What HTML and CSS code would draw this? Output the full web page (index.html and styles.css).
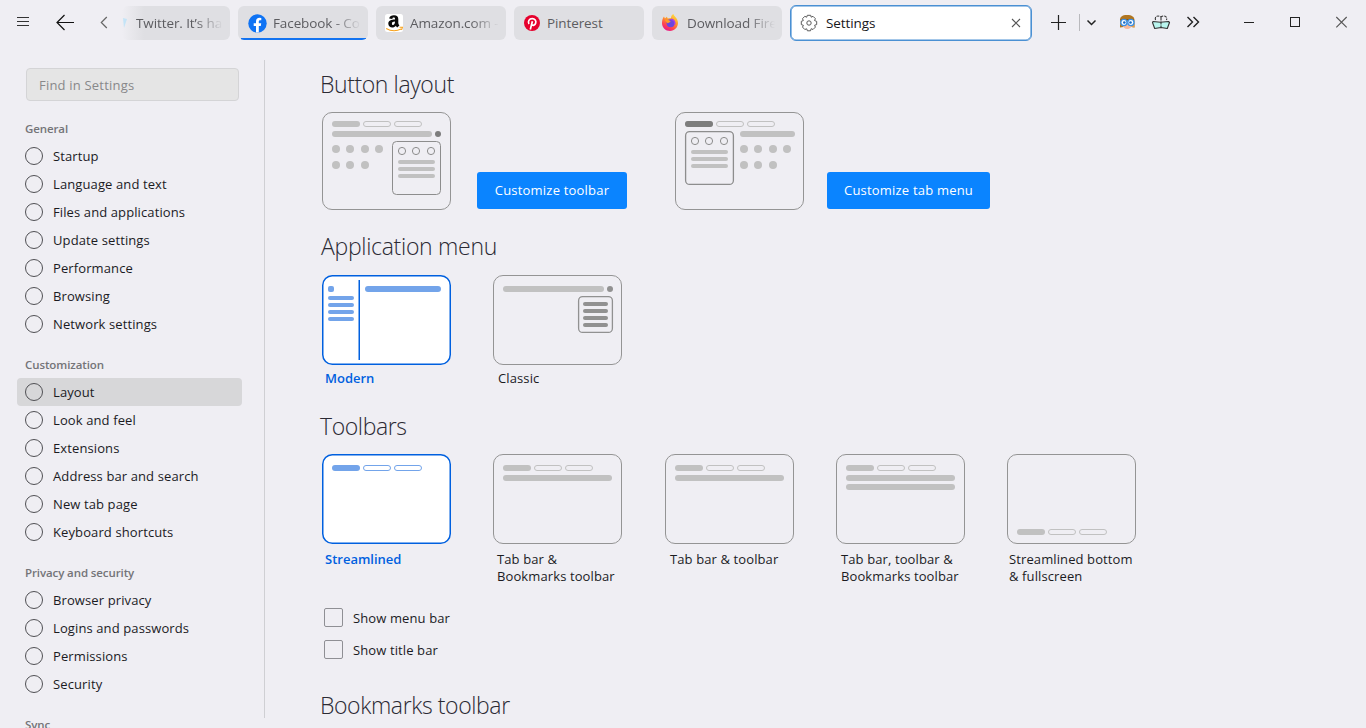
FILE: index.html
```html
<!DOCTYPE html>
<html lang="en">
<head>
<meta charset="utf-8">
<title>Settings</title>
<link rel="stylesheet" href="styles.css">
</head>
<body>
<svg class="defs" aria-hidden="true">
  <defs>
    <g id="tabs3">
      <rect x="0" y="0" width="28" height="6" rx="3" fill="currentColor"/>
      <rect x="31.500" y=".5" width="27" height="5" rx="2.500" fill="none" stroke="currentColor"/>
      <rect x="62.500" y=".5" width="27" height="5" rx="2.500" fill="none" stroke="currentColor"/>
    </g>
    <g id="dots" fill="#c1c1c1">
      <circle cx="4" cy="4" r="4"/><circle cx="18" cy="4" r="4"/><circle cx="33" cy="4" r="4"/><circle cx="47" cy="4" r="4"/>
      <circle cx="4" cy="20" r="4"/><circle cx="18" cy="20" r="4"/><circle cx="33" cy="20" r="4"/>
    </g>
    <g id="panel">
      <g fill="none" stroke="#8d8d8d"><circle cx="10" cy="10" r="3.600"/><circle cx="24" cy="10" r="3.600"/><circle cx="39" cy="10" r="3.600"/></g>
      <g fill="#c1c1c1"><rect x="6" y="19" width="37" height="4" rx="2"/><rect x="6" y="26" width="37" height="4" rx="2"/><rect x="6" y="33" width="37" height="4" rx="2"/></g>
    </g>
  </defs>
</svg>

<header class="titlebar">
  <div class="tool menu"><svg width="46" height="44"><path d="M17 17.500h12M17 21.500h12M17 25.500h12" stroke="#333" fill="none"/></svg></div>
  <div class="tool back"><svg width="38" height="44"><path d="M28 22.500H11M18.500 15l-7.500 7.500 7.500 7.500" stroke="#111" stroke-width="1.200" fill="none"/></svg></div>
  <div class="tool scroll"><svg width="38" height="44"><path d="M22.800 17l-5.500 5.500 5.500 5.500" stroke="#666" stroke-width="1.200" fill="none"/></svg></div>
  <nav class="tabs">
    <div class="tab first"><svg class="bird" width="6" height="12"><path d="M1 1l4 1-3 9z" fill="#c4e4f7"/></svg><span class="title">Twitter. It’s ha</span></div>
    <div class="tab loaded">
      <svg width="19" height="19" viewBox="0 0 19 19"><circle cx="9.500" cy="9.500" r="9.200" fill="#0f73f4"/><path d="M8 18.600V12H5.700V9.300H8V7.400C8 5 9.400 3.800 11.400 3.800l1.900.2v2.300h-1.100c-1.100 0-1.400.6-1.400 1.300v1.700h2.400l-.4 2.700h-2v6.600z" fill="#fff"/></svg>
      <span class="title">Facebook - Co</span>
    </div>
    <div class="tab amazon">
      <svg width="18" height="18" viewBox="0 0 18 18"><rect width="18" height="18" rx="2.500" fill="#fff"/><path d="M4.200 4.500C4.500 2.200 6.500 1.200 9 1.200c3 0 4.300 1.500 4.300 3.800v4c0 1 .4 1.600 1.100 2.400l-2.200 2c-.6-.5-1-1-1.300-1.700-2.200 3-7.600 2.100-7.600-1.900C3.300 6.600 6.100 5.700 10 5.600c.1-1.500-.2-2-1.200-2-.9 0-1.300.5-1.500 1.300zM10 7.600c-2.200 0-3.100.7-3.100 2.100 0 2.100 3.200 1.900 3.100-2.100z" fill="#0a0a0a" fill-rule="evenodd"/><path d="M1.200 14.500c4.700 2.700 10.500 2.700 15 .5M14.500 13.200l2.900.1-.8 2.500" fill="none" stroke="#f7a11a" stroke-width="1.100"/></svg>
      <span class="title">Amazon.com -</span>
    </div>
    <div class="tab pin">
      <svg width="16" height="16" viewBox="0 0 16 16"><circle cx="8" cy="8" r="8" fill="#e6002d"/><path d="M5 9C3.500 6.500 5.200 3.700 8.200 3.700c2.700 0 4.200 1.900 3.500 4.300-.6 2.200-2.900 3-4 1.500M8.400 6.300L6.300 14.500" fill="none" stroke="#fff" stroke-width="1.700"/></svg>
      <span class="title plain">Pinterest</span>
    </div>
    <div class="tab fox">
      <svg width="18" height="18" viewBox="0 0 18 18">
        <defs><linearGradient id="fx" x1=".8" y1="0" x2=".3" y2="1"><stop offset="0" stop-color="#ffe045"/><stop offset=".4" stop-color="#ff9a2a"/><stop offset=".75" stop-color="#ff4052"/><stop offset="1" stop-color="#e5168f"/></linearGradient></defs>
        <path d="M1 9C1 5.500 2 3.700 3 2.500l.9 2 2-1.800.8 1.900L10 4.100C10 2 11.500.5 12.400.1c.3 2.200 4.600 4 4.600 9C17 13.500 13.500 17 9 17S1 13.500 1 9z" fill="url(#fx)"/>
        <circle cx="9.600" cy="9.300" r="4" fill="#6b45e0"/><path d="M3.500 5.700C6 5 9 5.800 9.700 8.100 8 7.900 7.800 9.500 6.300 9.100" fill="#ff9d25"/><path d="M10 5.300c2.600.2 4.300 2.400 3.600 5.200" fill="none" stroke="#a83be8" stroke-width="1.500"/>
      </svg>
      <span class="title">Download Fire</span>
    </div>
    <div class="tab active">
      <svg width="18" height="18" viewBox="0 0 18 18" fill="none" stroke="#5a5a5a"><path stroke-linejoin="round" d="M7.300 1.300h3.400l.5 1.900 1.800-.9 2.400 2.400-.9 1.800 2.200.9v3.200l-2.100.6.8 1.900-2.400 2.400-1.800-.8-.7 2.100H7.400l-.7-2-1.900.7-2.300-2.400.9-1.800-2.100-.7V7.300l2-.7-.8-1.900 2.300-2.400 1.900.9z"/><circle cx="9" cy="9" r="2.200"/></svg>
      <span class="title plain">Settings</span>
      <svg class="close" width="10" height="10"><path d="M1 1l8 8M9 1l-8 8" stroke="#555" stroke-width="1.100"/></svg>
    </div>
  </nav>
  <div class="tool"><svg width="47" height="44"><path d="M19 22.500h15M26.500 15v15" stroke="#222" stroke-width="1.200"/></svg></div>
  <div class="tool sep"><svg width="26" height="44"><path d="M8.500 20.500l4 4 4-4" stroke="#222" stroke-width="1.500" fill="none"/></svg></div>
  <div class="tool"><svg width="44" height="44"><path d="M15 27.500V20c0-3 2-5 7-5s7.500 2 7.500 5v7.500l-3-.5h-8z" fill="#b0751f"/><path d="M15 24h14.500v3.500l-3-.5h-8z" fill="#e3a04f"/><ellipse cx="22.300" cy="25" rx="4.500" ry="4" fill="#f8b999"/><path d="M15.500 19.500h13.500" stroke="#8a5713"/><g fill="#fff" stroke="#3a90e6" stroke-width="1.300"><circle cx="18.900" cy="22.500" r="3.100"/><circle cx="25.900" cy="22.500" r="3.100"/></g><circle cx="19.300" cy="22.500" r="1.300" fill="#1769c4"/><circle cx="25.500" cy="22.500" r="1.300" fill="#1769c4"/></svg></div>
  <div class="tool"><svg width="24" height="44"><path d="M4 21.500l7.500.8 8-.8 1 1-2.200 6-6.300-1-6.300 1-2.200-6z" fill="#b9f5ee" stroke="#333" stroke-width="1.100" stroke-linejoin="round"/><path d="M12 17.500v10M6.500 20c-1-3 1.500-5.500 5.500-3 4-2.500 6.500 0 5.500 3" fill="none" stroke="#333" stroke-width="1.100" stroke-dasharray="3 1"/></svg></div>
  <div class="tool"><svg width="53" height="44"><path d="M14.500 17l5 5-5 5M20.500 17l5 5-5 5" fill="none" stroke="#222" stroke-width="1.400"/></svg></div>
  <div class="tool win"><svg width="46" height="44"><path d="M18 22.500h10" stroke="#222"/></svg></div>
  <div class="tool win"><svg width="46" height="44"><rect x="18.500" y="17.500" width="9" height="9" fill="none" stroke="#222"/></svg></div>
  <div class="tool win"><svg width="48" height="44"><path d="M18.300 17l10.400 10.400M28.700 17L18.300 27.400" stroke="#555" stroke-width="1.100"/></svg></div>
</header>

<div class="page">
  <aside class="sidebar">
    <input class="search" type="text" placeholder="Find in Settings">
    <h2 class="group">General</h2>
    <ul class="nav">
      <li>Startup</li><li>Language and text</li><li>Files and applications</li><li>Update settings</li><li>Performance</li><li>Browsing</li><li>Network settings</li>
    </ul>
    <h2 class="group">Customization</h2>
    <ul class="nav">
      <li class="selected">Layout</li><li>Look and feel</li><li>Extensions</li><li>Address bar and search</li><li>New tab page</li><li>Keyboard shortcuts</li>
    </ul>
    <h2 class="group">Privacy and security</h2>
    <ul class="nav">
      <li>Browser privacy</li><li>Logins and passwords</li><li>Permissions</li><li>Security</li>
    </ul>
    <h2 class="group">Sync</h2>
  </aside>

  <main class="content">
    <section class="buttons">
      <h1>Button layout</h1>
      <div class="row">
        <svg class="art" width="129" height="98">
          <rect x=".5" y=".5" width="128" height="97" rx="9.500" fill="none" stroke="#949494"/>
          <use href="#tabs3" x="10" y="9" color="#c1c1c1"/>
          <rect x="10" y="19" width="100" height="6" rx="3" fill="#c1c1c1"/><circle cx="116" cy="22" r="3" fill="#7d7d7d"/>
          <use href="#dots" x="10" y="33"/>
          <rect x="70.500" y="29.500" width="48" height="53" rx="4" fill="none" stroke="#8d8d8d"/>
          <use href="#panel" x="70" y="29"/>
        </svg>
        <button class="primary toolbar">Customize toolbar</button>
        <svg class="art" width="129" height="98">
          <rect x=".5" y=".5" width="128" height="97" rx="9.500" fill="none" stroke="#949494"/>
          <use href="#tabs3" x="10" y="9" color="#c1c1c1"/><rect x="10" y="9" width="28" height="6" rx="3" fill="#7d7d7d"/>
          <rect x="10.600" y="19.600" width="47.800" height="52.800" rx="4" fill="none" stroke="#8d8d8d" stroke-width="1.300"/>
          <use href="#panel" x="10" y="19"/>
          <rect x="65" y="19" width="55" height="6" rx="3" fill="#c1c1c1"/>
          <use href="#dots" x="65" y="33"/>
        </svg>
        <button class="primary tabmenu">Customize tab menu</button>
      </div>
    </section>

    <section class="appmenu">
      <h1>Application menu</h1>
      <div class="cards">
        <figure class="card on">
          <svg class="art" width="129" height="90">
            <rect x=".75" y=".75" width="127.500" height="88.500" rx="9.500" fill="#fff" stroke="#0060df" stroke-width="1.500"/>
            <rect x="6" y="11" width="6" height="6" rx="2" fill="#73a4ea"/>
            <g fill="#73a4ea"><rect x="6" y="21" width="26" height="4" rx="2"/><rect x="6" y="28" width="26" height="4" rx="2"/><rect x="6" y="35" width="26" height="4" rx="2"/><rect x="6" y="42" width="26" height="4" rx="2"/><rect x="43" y="11" width="76" height="6" rx="3"/></g>
            <path d="M37.250 5v80" stroke="#0060df" stroke-width="1.500"/>
          </svg>
          <figcaption>Modern</figcaption>
        </figure>
        <figure class="card classic">
          <svg class="art" width="129" height="90">
            <rect x=".5" y=".5" width="128" height="89" rx="9.500" fill="none" stroke="#949494"/>
            <rect x="10" y="11" width="101" height="6" rx="3" fill="#c1c1c1"/><circle cx="117" cy="14" r="3" fill="#919191"/>
            <rect x="85.600" y="21.600" width="33.800" height="35.800" rx="4" fill="none" stroke="#919191" stroke-width="1.300"/>
            <g fill="#919191"><rect x="90" y="27" width="25" height="4" rx="2"/><rect x="90" y="34" width="25" height="4" rx="2"/><rect x="90" y="41" width="25" height="4" rx="2"/><rect x="90" y="48" width="25" height="4" rx="2"/></g>
          </svg>
          <figcaption>Classic</figcaption>
        </figure>
      </div>
    </section>

    <section class="toolbars">
      <h1>Toolbars</h1>
      <div class="cards">
        <figure class="card on">
          <svg class="art" width="129" height="90"><rect x=".75" y=".75" width="127.500" height="88.500" rx="9.500" fill="#fff" stroke="#0060df" stroke-width="1.500"/><use href="#tabs3" x="10" y="11" color="#73a4ea"/></svg>
          <figcaption>Streamlined</figcaption>
        </figure>
        <figure class="card">
          <svg class="art" width="129" height="90"><rect x=".5" y=".5" width="128" height="89" rx="9.500" fill="none" stroke="#949494"/><use href="#tabs3" x="10" y="11" color="#c1c1c1"/><rect x="10" y="21" width="109" height="6" rx="3" fill="#c1c1c1"/></svg>
          <figcaption>Tab bar &amp;<br>Bookmarks toolbar</figcaption>
        </figure>
        <figure class="card third">
          <svg class="art" width="129" height="90"><rect x=".5" y=".5" width="128" height="89" rx="9.500" fill="none" stroke="#949494"/><use href="#tabs3" x="10" y="11" color="#c1c1c1"/><rect x="10" y="21" width="109" height="6" rx="3" fill="#c1c1c1"/></svg>
          <figcaption>Tab bar &amp; toolbar</figcaption>
        </figure>
        <figure class="card fourth">
          <svg class="art" width="129" height="90"><rect x=".5" y=".5" width="128" height="89" rx="9.500" fill="none" stroke="#949494"/><use href="#tabs3" x="10" y="11" color="#c1c1c1"/><rect x="10" y="21" width="109" height="6" rx="3" fill="#c1c1c1"/><rect x="10" y="30" width="109" height="6" rx="3" fill="#c1c1c1"/></svg>
          <figcaption>Tab bar, toolbar &amp;<br>Bookmarks toolbar</figcaption>
        </figure>
        <figure class="card bottom">
          <svg class="art" width="129" height="90"><rect x=".5" y=".5" width="128" height="89" rx="9.500" fill="none" stroke="#949494"/><use href="#tabs3" x="10" y="75" color="#c1c1c1"/></svg>
          <figcaption>Streamlined bottom<br>&amp; fullscreen</figcaption>
        </figure>
      </div>
      <div class="checks">
        <label><span class="box"></span>Show menu bar</label>
        <label><span class="box"></span>Show title bar</label>
      </div>
    </section>

    <section class="bookmarks"><h1>Bookmarks toolbar</h1></section>
  </main>
</div>
</body>
</html>
```

FILE: styles.css
```css
* { box-sizing: border-box; }
body {
  margin: 0;
  height: 728px;
  overflow: hidden;
  background: #efeef3;
  color: #1b1b1f;
  font: 13px/17px "Open Sans", "Noto Sans", sans-serif;
  letter-spacing: .11px;
}
svg { display: block; flex: none; }
.defs { position: absolute; width: 0; height: 0; }

.titlebar { display: flex; height: 46px; }
.tool { flex: none; height: 44px; }
.tabs { display: flex; gap: 8px; padding-top: 6px; flex: none; }
.tab {
  display: flex;
  align-items: center;
  gap: 6px;
  width: 130px;
  height: 34px;
  padding-left: 10px;
  padding-right: 3px;
  border-radius: 6px;
  background: #dfdfe3;
  color: #5c5c60;
}
.title {
  flex: 1;
  white-space: nowrap;
  font-size: 13.500px;
  line-height: 20px;
  letter-spacing: -.1px;
  -webkit-mask-image: linear-gradient(90deg, #000 calc(100% - 32px), transparent calc(100% - 4px));
  mask-image: linear-gradient(90deg, #000 calc(100% - 32px), transparent calc(100% - 4px));
}
.title.plain { -webkit-mask-image: none; mask-image: none; }
.tab.first { width: 108px; padding-left: 0; gap: 8px; background: linear-gradient(90deg, #efeef3, #dfdfe3 22px); }
.tab.loaded { background: linear-gradient(#1373f0, #1373f0) 3px 100% / 125px 2px no-repeat #dfdfe3; }
.tab.amazon { padding-left: 9px; gap: 7px; }
.tab.pin { gap: 7px; }
.tab.fox { padding-left: 9px; gap: 8px; }
.tab.active {
  width: 242px;
  height: 36px;
  margin-top: -1px;
  padding: 0 10px 0 9px;
  gap: 8px;
  border: 1px solid #4a90d3;
  box-shadow: inset 0 0 0 .6px #4a90d3;
  background: #fff;
  color: #17171a;
}
.sep { background: linear-gradient(#b9b9bd, #b9b9bd) 0 14px / 1px 17px no-repeat; }

.page { display: flex; height: 682px; }
.sidebar {
  width: 265px;
  flex: none;
  padding: 22px 0 0 17px;
  background: linear-gradient(#cfcfd3, #cfcfd3) 264px 14px / 1px 658px no-repeat;
}
.search {
  display: block;
  width: 213px;
  height: 33px;
  margin: 0 0 1px 9px;
  padding: 0 12px;
  border: 1px solid #d4d4d6;
  border-radius: 4px;
  background: #e5e5e5;
  font: 13px "Open Sans", sans-serif;
  letter-spacing: .2px;
}
.search::placeholder { color: #88888a; opacity: 1; }
.group {
  height: 40px;
  margin: 0;
  padding: 14px 0 0 8px;
  color: #747478;
  font-size: 11.500px;
  font-weight: 600;
  line-height: 26px;
  letter-spacing: -.1px;
}
.nav { margin: 0; padding: 0; list-style: none; }
.nav li {
  display: flex;
  align-items: center;
  gap: 11px;
  width: 225px;
  height: 28px;
  padding-left: 9px;
  border-radius: 4px;
}
.nav li::before {
  content: "";
  flex: none;
  width: 16px;
  height: 16px;
  margin-right: -1px;
  margin-left: -1px;
  border: 1px solid #505054;
  border-radius: 50%;
}
.nav .selected { background: #d7d7d9; }

.content { padding: 23px 0 0 57px; }
h1 {
  margin: 0 0 0 -2px;
  padding-bottom: 2px;
  color: #2b2a33;
  font-size: 23px;
  font-weight: 300;
  line-height: 30px;
  letter-spacing: -.4px;
}
.row { display: flex; align-items: flex-end; margin-top: 11px; }
.primary {
  height: 37px;
  margin: 0 48px 1px 26px;
  padding: 0 0 2px;
  border: 0;
  border-radius: 3px;
  background: #0a84ff;
  color: #fff;
  font: 13px "Open Sans", sans-serif;
  letter-spacing: .2px;
}
.toolbar { width: 150px; }
.tabmenu { width: 163px; margin-left: 23px; }
.appmenu { margin-top: 21px; }
.appmenu h1 { margin-left: -1px; letter-spacing: -.3px; }
.cards { display: flex; gap: 42px; }
.appmenu .cards { margin-top: 12px; }
.toolbars { margin-top: 24px; }
.toolbars .cards { margin-top: 11px; height: 131px; }
.card { width: 129px; margin: 0; white-space: nowrap; }
.card.third { margin-left: 1px; }
figcaption { margin-top: 7px; padding-left: 4px; }
.appmenu figcaption { margin-top: 5px; }
.on figcaption { padding-left: 3px; color: #0060df; font-weight: 600; letter-spacing: 0; }
.classic figcaption, .third figcaption, .fourth figcaption { padding-left: 5px; }
.bottom figcaption { padding-left: 2px; }
.checks { display: flex; flex-direction: column; gap: 13px; margin: 23px 0 0 2px; }
.checks label { display: flex; align-items: center; gap: 10px; height: 19px; padding-top: 1px; }
.box { width: 19px; height: 19px; margin-top: -1px; border: 1px solid #8f8f94; border-radius: 2px; }
.bookmarks { margin-top: 31px; }
```
